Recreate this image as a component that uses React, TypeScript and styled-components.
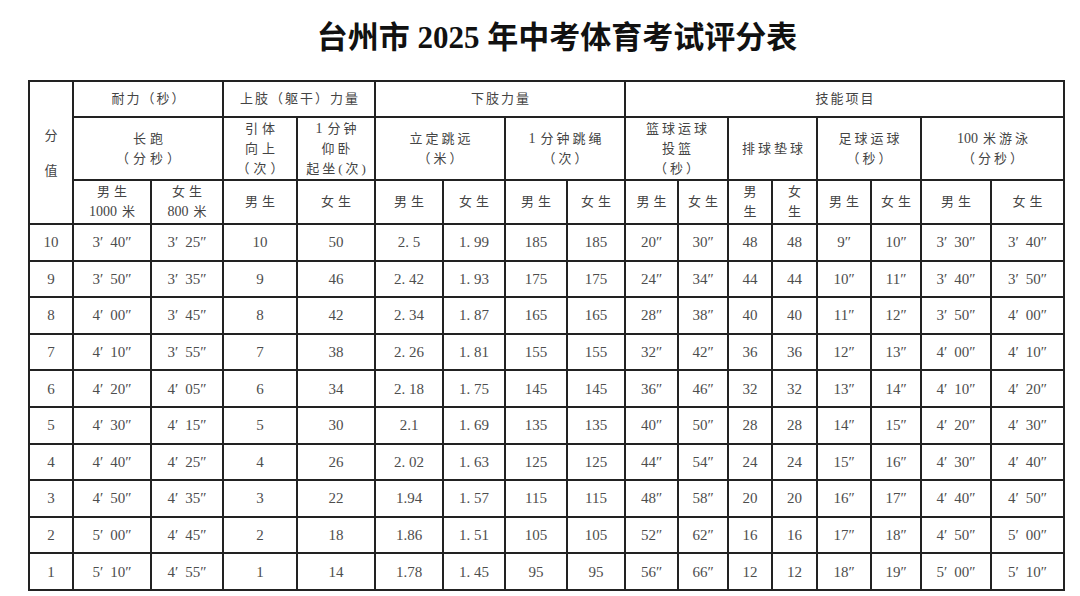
import React from "react";
import styled, { createGlobalStyle } from "styled-components";

const Global = createGlobalStyle`
  html, body { margin: 0; padding: 0; background: #fff; }
  body { font-family: "Liberation Serif", "Noto Sans CJK SC", serif; }
`;

const Page = styled.div`
  width: 1080px;
  height: 596px;
  background: #fff;
  overflow: hidden;
`;

const Title = styled.h1`
  margin: 0;
  padding: 18px 0 0 34px;
  text-align: center;
  font-family: "Liberation Serif", "Noto Sans CJK SC", serif;
  font-weight: 700;
  font-size: 31px;
  line-height: 40px;
  color: #111;
`;

const Table = styled.table`
  margin: 22px 0 0 28px;
  border-collapse: collapse;
  table-layout: fixed;
  width: 1035px;
  font-family: "Liberation Serif", "Noto Sans CJK SC", serif;
  color: #4a4a4a;
`;

const Row = styled.tr<{ $h: number }>`
  height: ${(p) => p.$h}px;
`;

const HeadCell = styled.th<{ $spacing?: number; $lh?: number }>`
  border: 2px solid #222;
  padding: 0 0 0 ${(p) => p.$spacing ?? 2}px;
  font-weight: 400;
  font-size: 13px;
  line-height: ${(p) => p.$lh ?? 20}px;
  letter-spacing: ${(p) => p.$spacing ?? 2}px;
  text-align: center;
  vertical-align: middle;
  color: #444;
`;

const Digits = styled.span`
  letter-spacing: 0;
  font-size: 14px;
  margin-right: 5px;
`;

const DataCell = styled.td`
  border: 2px solid #222;
  padding: 0;
  font-size: 15px;
  line-height: 18px;
  text-align: center;
  vertical-align: middle;
  color: #4d4d4d;
  white-space: nowrap;
`;

const Gap = styled.span`
  display: inline-block;
  width: 7px;
`;

const widths = [44, 78, 72, 74, 78, 68, 62, 62, 58, 53, 50, 44, 45, 54, 50, 70, 73];

const data: string[][] = [
  ["10", "3′ 40″", "3′ 25″", "10", "50", "2. 5", "1. 99", "185", "185", "20″", "30″", "48", "48", "9″", "10″", "3′ 30″", "3′ 40″"],
  ["9", "3′ 50″", "3′ 35″", "9", "46", "2. 42", "1. 93", "175", "175", "24″", "34″", "44", "44", "10″", "11″", "3′ 40″", "3′ 50″"],
  ["8", "4′ 00″", "3′ 45″", "8", "42", "2. 34", "1. 87", "165", "165", "28″", "38″", "40", "40", "11″", "12″", "3′ 50″", "4′ 00″"],
  ["7", "4′ 10″", "3′ 55″", "7", "38", "2. 26", "1. 81", "155", "155", "32″", "42″", "36", "36", "12″", "13″", "4′ 00″", "4′ 10″"],
  ["6", "4′ 20″", "4′ 05″", "6", "34", "2. 18", "1. 75", "145", "145", "36″", "46″", "32", "32", "13″", "14″", "4′ 10″", "4′ 20″"],
  ["5", "4′ 30″", "4′ 15″", "5", "30", "2.1", "1. 69", "135", "135", "40″", "50″", "28", "28", "14″", "15″", "4′ 20″", "4′ 30″"],
  ["4", "4′ 40″", "4′ 25″", "4", "26", "2. 02", "1. 63", "125", "125", "44″", "54″", "24", "24", "15″", "16″", "4′ 30″", "4′ 40″"],
  ["3", "4′ 50″", "4′ 35″", "3", "22", "1.94", "1. 57", "115", "115", "48″", "58″", "20", "20", "16″", "17″", "4′ 40″", "4′ 50″"],
  ["2", "5′ 00″", "4′ 45″", "2", "18", "1.86", "1. 51", "105", "105", "52″", "62″", "16", "16", "17″", "18″", "4′ 50″", "5′ 00″"],
  ["1", "5′ 10″", "4′ 55″", "1", "14", "1.78", "1. 45", "95", "95", "56″", "66″", "12", "12", "18″", "19″", "5′ 00″", "5′ 10″"],
];

function renderValue(v: string) {
  const m = v.match(/^(\d′)\s(\d\d″)$/);
  if (m) {
    return (
      <>
        {m[1]}
        <Gap />
        {m[2]}
      </>
    );
  }
  return v;
}

function renderLine(l: string) {
  const parts = l.split(/(\d+\s?)/).filter((p) => p !== "");
  return parts.map((p, i) =>
    /^\d/.test(p) ? <Digits key={i}>{p.trim()}</Digits> : <React.Fragment key={i}>{p}</React.Fragment>
  );
}

const Lines: React.FC<{ lines: string[] }> = ({ lines }) => (
  <>
    {lines.map((l, i) => (
      <React.Fragment key={i}>
        {i > 0 && <br />}
        {renderLine(l)}
      </React.Fragment>
    ))}
  </>
);

export default function App() {
  return (
    <Page>
      <Global />
      <Title>台州市 2025 年中考体育考试评分表</Title>
      <Table>
        <colgroup>
          {widths.map((w, i) => (
            <col key={i} style={{ width: w }} />
          ))}
        </colgroup>
        <thead>
          <Row $h={36}>
            <HeadCell rowSpan={3} $lh={35}>
              <Lines lines={["分", "值"]} />
            </HeadCell>
            <HeadCell colSpan={2}>耐力（秒）</HeadCell>
            <HeadCell colSpan={2}>上肢（躯干）力量</HeadCell>
            <HeadCell colSpan={4}>下肢力量</HeadCell>
            <HeadCell colSpan={8}>技能项目</HeadCell>
          </Row>
          <Row $h={63}>
            <HeadCell colSpan={2} $spacing={4}>
              <Lines lines={["长跑", "（分秒）"]} />
            </HeadCell>
            <HeadCell $spacing={4}>
              <Lines lines={["引体", "向上", "（次）"]} />
            </HeadCell>
            <HeadCell $spacing={3}>
              <Lines lines={["1 分钟", "仰卧", "起坐(次)"]} />
            </HeadCell>
            <HeadCell colSpan={2} $spacing={3}>
              <Lines lines={["立定跳远", "（米）"]} />
            </HeadCell>
            <HeadCell colSpan={2} $spacing={3}>
              <Lines lines={["1 分钟跳绳", "（次）"]} />
            </HeadCell>
            <HeadCell colSpan={2} $spacing={3}>
              <Lines lines={["篮球运球", "投篮", "（秒）"]} />
            </HeadCell>
            <HeadCell colSpan={2} $spacing={3}>
              排球垫球
            </HeadCell>
            <HeadCell colSpan={2} $spacing={3}>
              <Lines lines={["足球运球", "（秒）"]} />
            </HeadCell>
            <HeadCell colSpan={2} $spacing={3}>
              <Lines lines={["100 米游泳", "（分秒）"]} />
            </HeadCell>
          </Row>
          <Row $h={44}>
            <HeadCell $spacing={4}>
              <Lines lines={["男生", "1000 米"]} />
            </HeadCell>
            <HeadCell $spacing={4}>
              <Lines lines={["女生", "800 米"]} />
            </HeadCell>
            {["男生", "女生", "男生", "女生", "男生", "女生", "男生", "女生"].map((t, i) => (
              <HeadCell key={i} $spacing={4}>
                {t}
              </HeadCell>
            ))}
            <HeadCell $spacing={0} $lh={20}>
              <Lines lines={["男", "生"]} />
            </HeadCell>
            <HeadCell $spacing={0} $lh={20}>
              <Lines lines={["女", "生"]} />
            </HeadCell>
            {["男生", "女生", "男生", "女生"].map((t, i) => (
              <HeadCell key={i} $spacing={4}>
                {t}
              </HeadCell>
            ))}
          </Row>
        </thead>
        <tbody>
          {data.map((r, ri) => (
            <Row key={ri} $h={36.6}>
              {r.map((v, ci) => (
                <DataCell key={ci}>{renderValue(v)}</DataCell>
              ))}
            </Row>
          ))}
        </tbody>
      </Table>
    </Page>
  );
}
